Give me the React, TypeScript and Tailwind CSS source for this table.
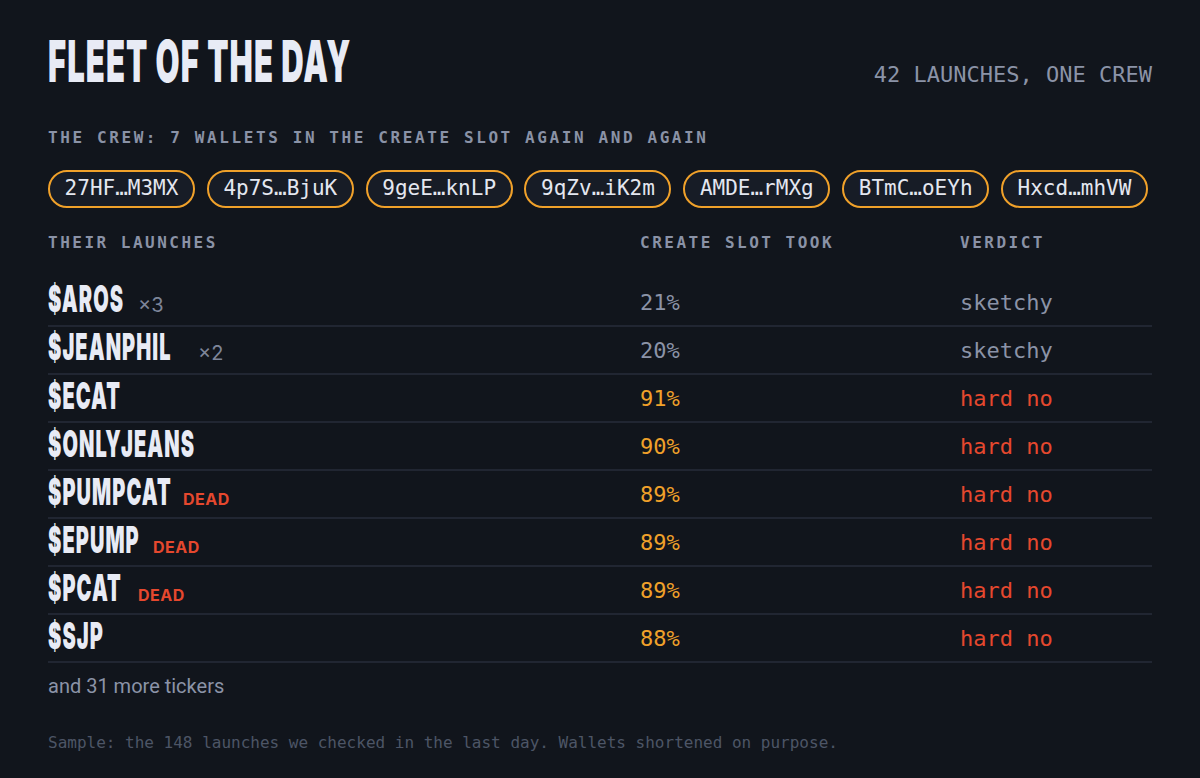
import React from "react";

const MONO = "font-['DejaVu_Sans_Mono','Liberation_Mono',monospace]";
const DISPLAY = "font-['Inter','Liberation_Sans',sans-serif] font-black";

const wallets = ["27HF…M3MX", "4p7S…BjuK", "9geE…knLP", "9qZv…iK2m", "AMDE…rMXg", "BTmC…oEYh", "Hxcd…mhVW"];

type Row = {
  ticker: string;
  box: string;
  extra?: "x3" | "x2";
  dead?: boolean;
  pct: string;
  bad: boolean;
};

const rows: Row[] = [
  { ticker: "$AROS", box: "w-[90px]", extra: "x3", pct: "21%", bad: false },
  { ticker: "$JEANPHIL", box: "w-[150px]", extra: "x2", pct: "20%", bad: false },
  { ticker: "$ECAT", box: "w-[70px]", pct: "91%", bad: true },
  { ticker: "$ONLYJEANS", box: "w-[145px]", pct: "90%", bad: true },
  { ticker: "$PUMPCAT", box: "w-[135px]", dead: true, pct: "89%", bad: true },
  { ticker: "$EPUMP", box: "w-[105px]", dead: true, pct: "89%", bad: true },
  { ticker: "$PCAT", box: "w-[90px]", dead: true, pct: "89%", bad: true },
  { ticker: "$SJP", box: "w-[59px]", pct: "88%", bad: true },
];

function Ticker({ text, box }: { text: string; box: string }) {
  return (
    <span className={`inline-block shrink-0 ${box}`}>
      <span className={`inline-block whitespace-nowrap origin-left scale-x-[0.54] text-[37px] leading-none tracking-[2px] text-[#e8ebf5] ${DISPLAY}`}>
        {text}
      </span>
    </span>
  );
}

export default function App() {
  return (
    <div className="min-h-[778px] w-full bg-[#11151c] px-12 pt-[32px]">
      {/* Header */}
      <div className="flex items-baseline justify-between">
        <span className="inline-block w-[302px]">
          <span className={`inline-block whitespace-nowrap origin-left scale-x-[0.535] text-[58px] leading-none tracking-[2px] text-[#e8ebf5] ${DISPLAY}`}>
            FLEET OF THE DAY
          </span>
        </span>
        <span className={`text-[22px] text-[#8b93a7] ${MONO}`}>42 LAUNCHES, ONE CREW</span>
      </div>

      {/* Crew */}
      <div className={`mt-[35px] text-[16px] font-bold tracking-[2.6px] text-[#8a92a6] ${MONO}`}>
        THE CREW: 7 WALLETS IN THE CREATE SLOT AGAIN AND AGAIN
      </div>
      <div className="mt-[20px] flex w-[1100px] justify-between">
        {wallets.map((w) => (
          <span
            key={w}
            className={`flex h-[38px] w-[147px] items-center justify-center rounded-full border-2 border-[#f0a12a] bg-[#171c26] text-[21px] text-[#e4e7f0] ${MONO}`}
          >
            {w}
          </span>
        ))}
      </div>

      {/* Table */}
      <div className={`mt-[23px] grid grid-cols-[592px_320px_192px] text-[16px] font-bold tracking-[2.5px] text-[#8a92a6] ${MONO}`}>
        <span>THEIR LAUNCHES</span>
        <span>CREATE SLOT TOOK</span>
        <span>VERDICT</span>
      </div>
      <div className="mt-[24px]">
        {rows.map((r) => (
          <div
            key={r.ticker}
            className="grid h-[48px] grid-cols-[592px_320px_192px] items-center border-b-2 border-[#212632]"
          >
            <div className="flex items-baseline pb-[4px]">
              <Ticker text={r.ticker} box={r.box} />
              {r.extra && (
                <span className="font-['Inter','Liberation_Sans',sans-serif] text-[20px] text-[#7d8599]">
                  ×{r.extra === "x3" ? "3" : "2"}
                </span>
              )}
              {r.dead && (
                <span className="font-['Inter','Liberation_Sans',sans-serif] text-[16px] font-bold tracking-[0.5px] text-[#e5482e]">
                  DEAD
                </span>
              )}
            </div>
            <span className={`text-[22px] ${MONO} ${r.bad ? "text-[#f0a12a]" : "text-[#8b93a7]"}`}>{r.pct}</span>
            <span className={`text-[22px] ${MONO} ${r.bad ? "text-[#e5482e]" : "text-[#8b93a7]"}`}>
              {r.bad ? "hard no" : "sketchy"}
            </span>
          </div>
        ))}
      </div>

      <div className="mt-[8px] font-['Roboto','Liberation_Sans',sans-serif] text-[20px] text-[#8b93a7]">
        and 31 more tickers
      </div>

      <div className={`mt-[30px] text-[16px] text-[#4d5566] ${MONO}`}>
        Sample: the 148 launches we checked in the last day. Wallets shortened on purpose.
      </div>
    </div>
  );
}
